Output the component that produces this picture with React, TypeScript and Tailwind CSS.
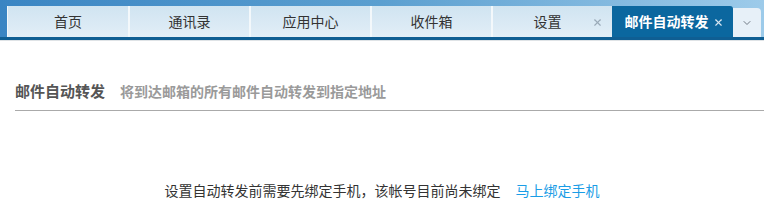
import React from 'react';
import { X, ChevronDown } from 'lucide-react';

const tabs = [
  { label: '首页', closable: false },
  { label: '通讯录', closable: false },
  { label: '应用中心', closable: false },
  { label: '收件箱', closable: false },
  { label: '设置', closable: true },
];

const font = { fontFamily: '"Noto Sans CJK SC", "Liberation Sans", sans-serif' };

export default function App() {
  return (
    <div className="w-[764px] h-[219px] bg-white overflow-hidden" style={font}>
      <div className="bg-gradient-to-r from-[#3a85c3] via-[#5b9fd0] to-[#9dcbea]">
        <div className="flex items-end h-[37px] pl-[7px]">
          {tabs.map((t, i) => (
            <div
              key={t.label}
              className={`relative flex items-center justify-center w-[121px] h-[31px] bg-gradient-to-b from-[#d0e4f1] to-[#e2eef7] text-[14px] text-[#333] ${i > 0 ? 'border-l-2 border-l-[#f3f8fb]' : 'border-l border-l-[#f3f8fb]'}`}
            >
              <span className={t.closable ? 'pr-[10px]' : ''}>{t.label}</span>
              {t.closable && (
                <X className="absolute right-[9px] top-[11px] w-[11px] h-[11px] text-[#9aaab8]" strokeWidth={2.5} />
              )}
            </div>
          ))}
          <div className="relative flex items-center justify-center w-[121px] h-[31px] bg-[#0b679f] rounded-tr-[3px] text-[14px] font-bold text-white">
            <span className="pr-[12px]">邮件自动转发</span>
            <X className="absolute right-[9px] top-[11px] w-[11px] h-[11px] text-[#d6e6f2]" strokeWidth={2.5} />
          </div>
          <div className="flex items-center justify-center w-[28px] h-[29px] bg-[#e7f0f8] rounded-tr-[4px]">
            <ChevronDown className="w-[12px] h-[12px] text-[#707a85]" strokeWidth={2} />
          </div>
        </div>
        <div className="h-[3px] bg-[#0f5e93]" />
      </div>
      <div className="h-[1px] bg-[#dfe3e6]" />

      <div className="pl-[15px] pt-[38px]">
        <div className="flex items-center h-[24px] border-b-0">
          <span className="text-[15px] font-bold text-[#555]">邮件自动转发</span>
          <span className="ml-[15px] text-[14px] font-semibold text-[#9a9a9a]">将到达邮箱的所有邮件自动转发到指定地址</span>
        </div>
        <div className="mt-[7px] h-[1px] bg-[#aaa]" />
      </div>

      <div className="flex justify-center items-center mt-[69px] text-[14px]">
        <span className="text-[#333]">设置自动转发前需要先绑定手机，该帐号目前尚未绑定</span>
        <a className="ml-[15px] text-[#1a9de6] cursor-pointer">马上绑定手机</a>
      </div>
    </div>
  );
}
